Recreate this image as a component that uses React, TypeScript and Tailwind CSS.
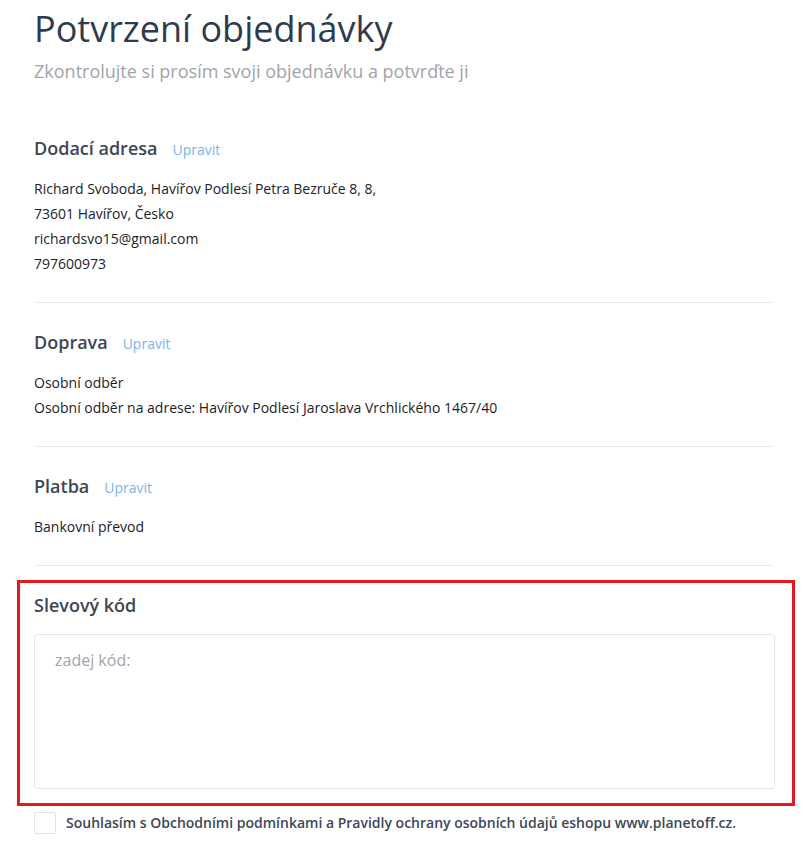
import { useState } from 'react'

function Section({
  title,
  lines,
}: {
  title: string
  lines: string[]
}) {
  return (
    <section className="border-b border-[#e9e9ec] pt-[27px] pb-[26px]">
      <div className="mb-[16px] flex items-baseline gap-[15px]">
        <h2 className="text-[18px] leading-[24px] font-semibold text-[#3d4654]">
          {title}
        </h2>
        <a href="#" className="text-[14px] text-[#7ab4ec]">
          Upravit
        </a>
      </div>
      <div className="text-[14px] leading-[25px] text-[#1d2228]">
        {lines.map((l) => (
          <p key={l}>{l}</p>
        ))}
      </div>
    </section>
  )
}

export default function App() {
  const [code, setCode] = useState('')
  const [agree, setAgree] = useState(false)

  return (
    <div
      className="min-h-[852px] bg-white pl-[34px] pr-[29px]"
      style={{ fontFamily: '"Open Sans", "Noto Sans", sans-serif' }}
    >
      <header className="mb-[26px] pt-[7px]">
        <h1 className="text-[36px] leading-[44px] font-normal text-[#2f3b4d]">
          Potvrzení objednávky
        </h1>
        <p className="mt-[8px] text-[18px] leading-[24px] text-[#a3a3ab]">
          Zkontrolujte si prosím svoji objednávku a potvrďte ji
        </p>
      </header>

      <Section
        title="Dodací adresa"
        lines={[
          'Richard Svoboda, Havířov Podlesí Petra Bezruče 8, 8,',
          '73601 Havířov, Česko',
          'richardsvo15@gmail.com',
          '797600973',
        ]}
      />
      <Section
        title="Doprava"
        lines={[
          'Osobní odběr',
          'Osobní odběr na adrese: Havířov Podlesí Jaroslava Vrchlického 1467/40',
        ]}
      />
      <Section title="Platba" lines={['Bankovní převod']} />

      <div className="mt-[14px] -ml-[17px] mr-[-21px] border-[3px] border-[#e3191f] pt-[10px] pb-[14px] pl-[14px] pr-[17px]">
        <h2 className="text-[18px] leading-[24px] font-semibold text-[#3d4654]">
          Slevový kód
        </h2>
        <textarea
          value={code}
          onChange={(e) => setCode(e.target.value)}
          placeholder="zadej kód:"
          className="mt-[17px] block h-[155px] w-full resize-none rounded-[3px] border border-[#e4e4e6] px-5 pt-[13px] text-[16px] leading-[24px] text-[#333] outline-none placeholder:text-[#a3a3a8]"
          style={{ fontFamily: '"Open Sans", "Noto Sans", sans-serif' }}
        />
      </div>

      <label className="mt-[6px] flex cursor-pointer items-center gap-[10px]">
        <button
          type="button"
          role="checkbox"
          aria-checked={agree}
          onClick={() => setAgree((a) => !a)}
          className="h-[22px] w-[22px] shrink-0 rounded-[2px] border border-[#e2e2e5] bg-white"
        />
        <span className="text-[14px] leading-[22px] font-semibold text-[#3c4757]">
          Souhlasím s Obchodními podmínkami a Pravidly ochrany osobních údajů
          eshopu www.planetoff.cz.
        </span>
      </label>
    </div>
  )
}
